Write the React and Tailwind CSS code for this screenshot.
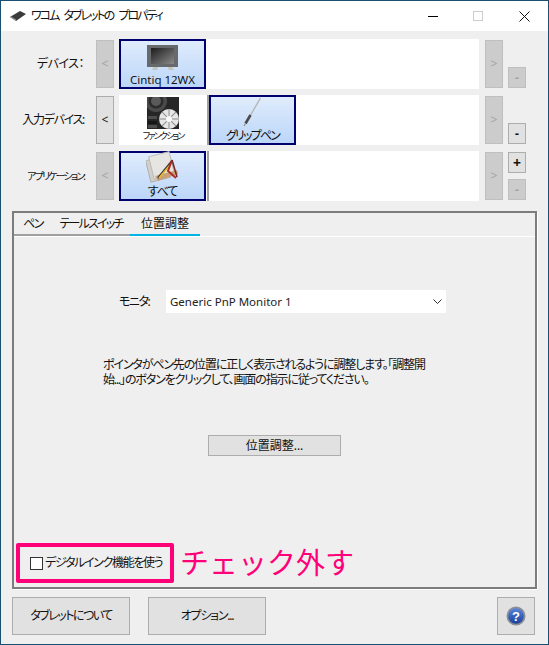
import React from "react";

const FONT = "font-['Noto_Sans','Noto_Sans_CJK_JP',sans-serif] [font-feature-settings:'palt']";

function SmallButton({ label, disabled, className = "" }) {
  return (
    <div
      className={`flex items-center justify-center border ${
        disabled
          ? "bg-[#cccccc] border-[#bfbfbf] text-[#a3a3a3]"
          : "bg-[#e1e1e1] border-[#adadad] text-[#111]"
      } ${className}`}
    >
      {label}
    </div>
  );
}

function MonitorIcon() {
  return (
    <svg width="32" height="26" viewBox="0 0 32 26">
      <defs>
        <linearGradient id="scr" x1="0" y1="0" x2="1" y2="1">
          <stop offset="0" stopColor="#1c1c1c" />
          <stop offset="1" stopColor="#8a8a8a" />
        </linearGradient>
      </defs>
      <path d="M7 21h5l-2 4H5z M20 21h5l2 4h-5z" fill="#c4c4bc" />
      <rect x="0" y="0" width="31" height="22" fill="#666a6c" />
      <rect x="4" y="3" width="23" height="16" fill="url(#scr)" />
    </svg>
  );
}

function FunctionIcon() {
  const spokes = [0, 45, 90, 135];
  return (
    <svg width="32" height="32" viewBox="0 0 32 32">
      <rect width="32" height="32" fill="#262626" />
      <circle cx="9" cy="4" r="11" fill="#4a4a4a" />
      <circle cx="9" cy="4" r="7.5" fill="#2c2c2c" />
      <circle cx="9" cy="4" r="5" fill="#5a5a5a" />
      <rect x="1" y="19" width="9" height="3" fill="#4d4d4d" />
      <rect x="1" y="24" width="9" height="3" fill="#161616" />
      <rect x="1" y="28" width="9" height="3" fill="#4d4d4d" />
      <circle cx="22" cy="22" r="10" fill="#e6e6e6" />
      {spokes.map((a) => (
        <rect
          key={a}
          x="21.5"
          y="12"
          width="1"
          height="20"
          fill="#8c8c8c"
          transform={`rotate(${a} 22 22)`}
        />
      ))}
      <circle cx="22" cy="22" r="3" fill="#fafafa" />
    </svg>
  );
}

function PenIcon() {
  return (
    <svg width="20" height="30" viewBox="0 0 20 30">
      <path d="M17.5 1L7 19" stroke="#b5b5b5" strokeWidth="1.4" />
      <path d="M7.5 18L2.5 26.5" stroke="#4a4a4a" strokeWidth="2.6" />
      <path d="M2.5 26.5L1 29" stroke="#8e8e8e" strokeWidth="1.2" />
    </svg>
  );
}

function AllAppsIcon() {
  return (
    <svg width="34" height="32" viewBox="0 0 34 32">
      <rect x="2" y="7" width="20" height="22" fill="#d2d0cc" stroke="#b0aeaa" transform="rotate(-14 12 18)" />
      <rect x="5" y="3" width="21" height="23" fill="#e6e5e2" stroke="#bcbab6" transform="rotate(-14 15 14)" />
      <path d="M9 25L31 19L32 23L12 30z" fill="#c9a078" />
      <path d="M12 27L26 10" stroke="#3a3a3a" strokeWidth="2" />
      <path d="M13 27L24 14" stroke="#e8c030" strokeWidth="1.6" />
      <path d="M26 9L22 20L30 27" fill="none" stroke="#b02c24" strokeWidth="2" />
      <path d="M26 9L31 26" stroke="#7a2a24" strokeWidth="1.6" />
    </svg>
  );
}

function SelectedItem({ icon, label, labelClass = "" }) {
  return (
    <div className="flex h-full w-[87px] flex-col items-center border-2 border-[#00006e] bg-linear-to-b from-[#dfecfc] to-[#bcd6f9]">
      <div className="flex h-[30px] items-end justify-center">{icon}</div>
      <div className={`mt-auto whitespace-nowrap leading-[14px] text-[#111] ${labelClass}`}>{label}</div>
    </div>
  );
}

function Row({ label, labelClass = "", leftDisabled, plus, minusDisabled, children }) {
  return (
    <div className="flex h-[50px] items-center">
      <div className={`w-[83px] text-right whitespace-nowrap text-[#111] ${labelClass}`}>{label}</div>
      <SmallButton label="<" disabled={leftDisabled} className="ml-[12px] h-[48px] w-[18px] text-[12px]" />
      <div className="ml-[5px] flex h-full w-[360px] bg-white">{children}</div>
      <SmallButton label=">" disabled className="ml-[6px] h-[48px] w-[18px] text-[12px]" />
      <div className="ml-[5px] flex h-[48px] w-[18px] flex-col justify-between">
        {plus ? <SmallButton label="+" className="h-[21px] text-[14px] font-bold" /> : <div />}
        <SmallButton label="-" disabled={minusDisabled} className="h-[21px] text-[12px] font-bold" />
      </div>
    </div>
  );
}

function HelpIcon() {
  return (
    <svg width="20" height="20" viewBox="0 0 20 20">
      <defs>
        <linearGradient id="hb" x1="0" y1="0" x2="0" y2="1">
          <stop offset="0" stopColor="#5c86d8" />
          <stop offset="1" stopColor="#1a3f9c" />
        </linearGradient>
      </defs>
      <circle cx="10" cy="10" r="9.5" fill="#8a8f96" />
      <circle cx="10" cy="10" r="7.8" fill="url(#hb)" />
      <text x="10" y="14.5" textAnchor="middle" fontSize="13" fontWeight="700" fill="#fff" fontFamily="Liberation Sans">
        ?
      </text>
    </svg>
  );
}

export default function App() {
  return (
    <div className={`flex h-[645px] w-[549px] flex-col overflow-hidden border border-[#1a4f72] bg-[#efefef] text-[12px] ${FONT}`}>
      {/* title bar */}
      <div className="flex h-[30px] shrink-0 items-center bg-white">
        <svg className="ml-[9px]" width="16" height="10" viewBox="0 0 16 10">
          <path d="M0 6L10 0L16 3L6 10z" fill="#3c3c3c" />
          <path d="M0 6L6 10L6 8.4L1 5.4z" fill="#9a9a9a" />
        </svg>
        <span className="ml-[5px] whitespace-nowrap text-[12px] tracking-[-2px] text-[#111] [word-spacing:4px]">ワコム タブレットの プロパティ</span>
        <div className="ml-auto flex items-center">
          <div className="h-[1px] w-[10px] bg-black" />
          <div className="ml-[35px] h-[10px] w-[10px] border border-[#cccccc]" />
          <svg className="ml-[36px] mr-[18px]" width="11" height="11" viewBox="0 0 11 11">
            <path d="M0.5 0.5L10.5 10.5M10.5 0.5L0.5 10.5" stroke="#111" strokeWidth="1" />
          </svg>
        </div>
      </div>

      {/* device rows */}
      <div className="mt-[8px] flex flex-col gap-[6px]">
        <Row label="デバイス：" labelClass="tracking-[-0.5px]" leftDisabled minusDisabled>
          <SelectedItem icon={<MonitorIcon />} label="Cintiq 12WX" labelClass="text-[11.5px]" />
        </Row>
        <Row label="入力デバイス:" labelClass="tracking-[-1.3px]">
          <div className="flex h-full w-[88px] flex-col items-center pt-[2px]">
            <FunctionIcon />
            <div className="mt-auto pb-[3px] text-[9px] leading-[12px] tracking-[-1.9px] text-[#111]">ファンクション</div>
          </div>
          <div className="h-full w-[2px] bg-[#a0a0a0]" />
          <SelectedItem icon={<PenIcon />} label="グリップペン" labelClass="text-[12px] tracking-[-1.8px]" />
        </Row>
        <Row label="アプリケーション:" labelClass="text-[10px] tracking-[-1.9px]" leftDisabled plus minusDisabled>
          <SelectedItem icon={<AllAppsIcon />} label="すべて" labelClass="text-[12px] tracking-[-1px]" />
          <div className="ml-[1px] h-full w-[2px] bg-[#a0a0a0]" />
        </Row>
      </div>

      {/* tab panel */}
      <div className="ml-[11px] mt-[10px] flex h-[378px] w-[525px] flex-col border-2 border-[#7c7c7c] shadow-[1px_1px_0_#ffffff]">
        <div className="flex h-[24px] shrink-0 border-b border-white">
          <div className="flex w-[38px] items-center justify-center whitespace-nowrap border-b-2 border-[#a0a0a0] pt-[1px] tracking-[-1.5px] text-[#111]">ペン</div>
          <div className="flex w-[78px] items-center justify-center whitespace-nowrap border-b-2 border-[#a0a0a0] pt-[1px] tracking-[-1.8px] text-[#111]">テールスイッチ</div>
          <div className="flex w-[70px] items-center justify-center whitespace-nowrap border-b-2 border-[#00b4e6] pt-[1px] text-[#111]">位置調整</div>
        </div>

        <div className="flex flex-1 flex-col">
          <div className="mt-[53px] flex items-center">
            <span className="ml-[105px] w-[47px] whitespace-nowrap tracking-[-1.5px] text-[#111]">モニタ:</span>
            <div className="flex h-[23px] w-[280px] items-center justify-between bg-white px-[4px] text-[#222]">
              <span className="text-[11.5px]">Generic PnP Monitor 1</span>
              <svg width="9" height="5" viewBox="0 0 9 5">
                <path d="M0.5 0.5L4.5 4.5L8.5 0.5" fill="none" stroke="#333" strokeWidth="1" />
              </svg>
            </div>
          </div>

          <p className="ml-[89px] mt-[44px] whitespace-nowrap text-[12px] leading-[15px] tracking-[-1.15px] text-[#111]">
            ポインタがペン先の位置に正しく表示されるように調整します。「調整開
            <br />
            始...」のボタンをクリックして、画面の指示に従ってください。
          </p>

          <div className="ml-[194px] mt-[48px] flex h-[21px] w-[133px] items-center justify-center border border-[#adadad] bg-[#e1e1e1] text-[#111]">
            位置調整...
          </div>

          <div className="mb-[4px] ml-[2px] mt-auto flex items-center">
            <div className="flex h-[40px] w-[158px] shrink-0 items-center rounded-[2px] border-[4px] border-[#ff0078] pl-[10px]">
              <div className="h-[13px] w-[13px] shrink-0 border border-[#333] bg-white" />
              <span className="ml-[2px] whitespace-nowrap text-[12px] tracking-[-1.35px] text-[#111]">デジタルインク機能を使う</span>
            </div>
            <span className="ml-[6px] whitespace-nowrap text-[29px] leading-[34px] text-[#ff0078] [font-feature-settings:normal]">チェック外す</span>
          </div>
        </div>
      </div>

      {/* bottom buttons */}
      <div className="ml-[11px] mt-[8px] flex">
        <div className="flex h-[38px] w-[118px] items-center justify-center border border-[#adadad] bg-[#e1e1e1] tracking-[-1.5px] text-[#111]">タブレットについて</div>
        <div className="ml-[18px] flex h-[38px] w-[118px] items-center justify-center border border-[#adadad] bg-[#e1e1e1] tracking-[-1.2px] text-[#111]">オプション...</div>
        <div className="ml-[231px] flex h-[38px] w-[38px] items-center justify-center border border-[#adadad] bg-[#e1e1e1]">
          <HelpIcon />
        </div>
      </div>
    </div>
  );
}
